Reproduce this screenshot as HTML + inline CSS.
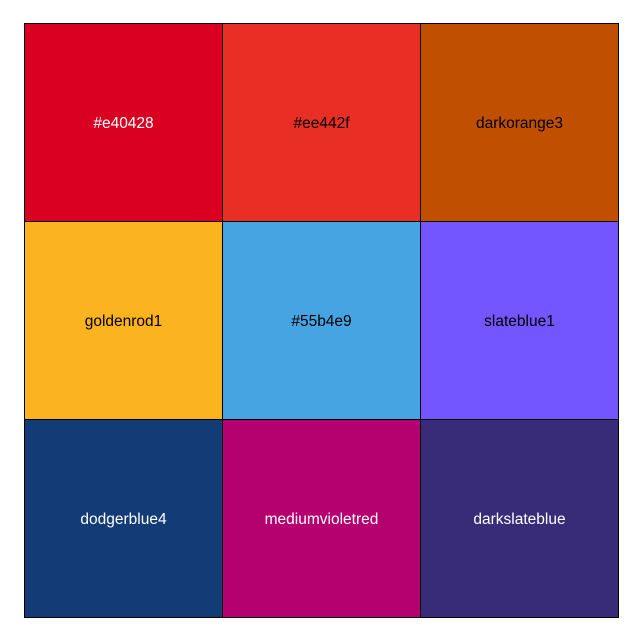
<!DOCTYPE html>
<html><head><style>
body{margin:0;background:#fff;width:643px;height:642px;position:relative;font-family:"Liberation Sans",sans-serif;}
.c{position:absolute;width:199px;height:199px;box-sizing:border-box;border:1px solid #000;display:flex;align-items:center;justify-content:center;font-size:15.5px;padding-top:3px;}
</style></head><body>
<div class="c" style="left:24px;top:23px;background:#d90021;color:#fff">#e40428</div>
<div class="c" style="left:222px;top:23px;background:#e82e25;color:#000">#ee442f</div>
<div class="c" style="left:420px;top:23px;background:#c05000;color:#000;">darkorange3</div>
<div class="c" style="left:24px;top:221px;background:#fbb31f;color:#000">goldenrod1</div>
<div class="c" style="left:222px;top:221px;background:#47a4e2;color:#000">#55b4e9</div>
<div class="c" style="left:420px;top:221px;background:#7356ff;color:#000;">slateblue1</div>
<div class="c" style="left:24px;top:419px;background:#133b76;color:#fff;">dodgerblue4</div>
<div class="c" style="left:222px;top:419px;background:#b5006f;color:#fff;">mediumvioletred</div>
<div class="c" style="left:420px;top:419px;background:#382b78;color:#fff;">darkslateblue</div>
</body></html>
